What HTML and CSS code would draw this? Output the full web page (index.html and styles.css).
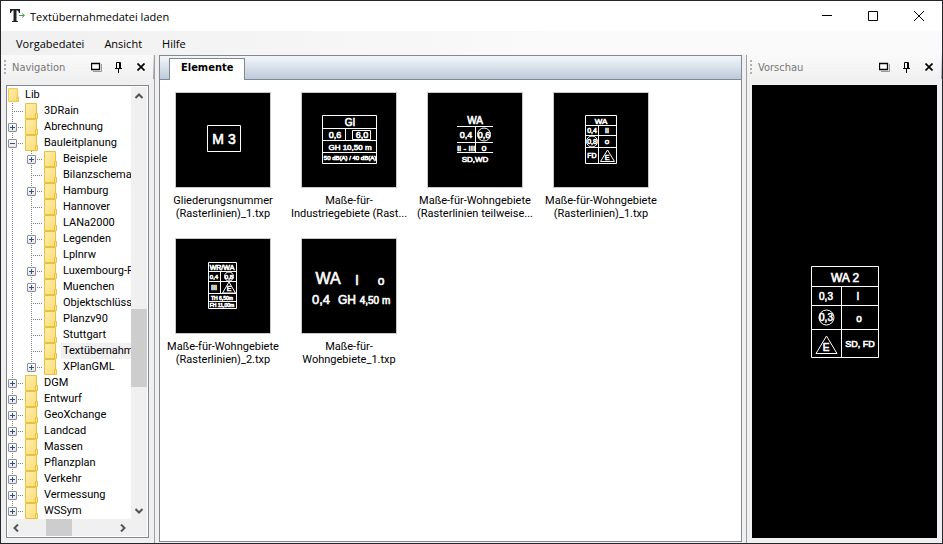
FILE: index.html
```html
<!DOCTYPE html>
<html lang="de">
<head>
<meta charset="utf-8">
<title>Textübernahmedatei laden</title>
<link rel="stylesheet" href="styles.css">
</head>
<body>
<svg class="defs" aria-hidden="true">
  <defs>
    <linearGradient id="paper" x1="0" y1="0" x2="1" y2="1"><stop offset="0" stop-color="#ffefae"/><stop offset="1" stop-color="#fbdc74"/></linearGradient>
    <symbol id="folder" viewBox="0 0 13 16">
      <path d="M0.5 0.5H11.5V15.5H0.5Z" fill="url(#paper)" stroke="#e9c13f"/>
      <path d="M10.5 10.5H12.5V15.5H10.5Z" fill="#fbe28a" stroke="#e9c13f"/>
    </symbol>
    <symbol id="float" viewBox="0 0 12 10">
      <path d="M2 9.500H10.500V2" fill="none" stroke="#999"/>
      <path d="M0.5 1.5H8.5V7.5H0.5Z" fill="#fff" stroke="#000" stroke-width="1.300"/>
    </symbol>
    <symbol id="pin" viewBox="0 0 8 11">
      <path d="M1.5 6V0.5H5.5V6M4.5 0V6M0 6.5H7M3.5 7V11" fill="none" stroke="#000"/>
    </symbol>
    <symbol id="cross" viewBox="0 0 8 8">
      <path d="M0.5 0.5L7.5 7.5M7.5 0.5L0.5 7.5" stroke="#000" stroke-width="1.7"/>
    </symbol>
    <symbol id="chevron" viewBox="0 0 8 6">
      <path d="M0.5 5L4 1.5L7.5 5" fill="none" stroke="#555" stroke-width="2"/>
    </symbol>
  </defs>
</svg>
<div class="window">
  <header class="titlebar">
    <svg class="app-icon" viewBox="0 0 16 16" aria-hidden="true">
      <path d="M0 1H10V5H9Q8.700 2.300 6.500 2.300V12.500Q6.500 13.300 8 13.300V14H2V13.300Q3.500 13.300 3.500 12.500V2.300Q1.300 2.300 1 5H0Z" fill="#222"/>
      <path d="M9 7.500H14M12 5.500L14.500 7.500L12 9.500" fill="none" stroke="#43a541"/>
    </svg>
    <h1>Textübernahmedatei laden</h1>
    <div class="window-buttons">
      <button aria-label="Minimieren"><svg viewBox="0 0 10 10"><path d="M0 4.500H10" stroke="#000"/></svg></button>
      <button aria-label="Maximieren"><svg viewBox="0 0 10 10"><path d="M0.500 0.500H9.500V9.500H0.500Z" fill="none" stroke="#000"/></svg></button>
      <button aria-label="Schließen"><svg viewBox="0 0 10 10"><path d="M0 0L10 10M10 0L0 10" stroke="#000"/></svg></button>
    </div>
  </header>
  <nav class="menubar">
    <button>Vorgabedatei</button><button>Ansicht</button><button>Hilfe</button>
  </nav>
  <main class="workspace">
    <aside class="dock dock-left">
      <div class="caption">
        <span class="grip"></span><h2>Navigation</h2>
        <button aria-label="Navigation lösen"><svg width="12" height="10"><use href="#float"/></svg></button>
        <button aria-label="Navigation anheften"><svg width="8" height="11"><use href="#pin"/></svg></button>
        <button aria-label="Navigation schließen"><svg width="8" height="8"><use href="#cross"/></svg></button>
      </div>
      <div class="tree-box">
        <div class="tree-view">
          <div class="node root"><svg class="folder"><use href="#folder"/></svg><span>Lib</span></div>
          <ul class="tree">
            <li><div class="node"><i></i><svg class="folder"><use href="#folder"/></svg><span>3DRain</span></div></li>
            <li><div class="node"><i><button aria-label="Abrechnung öffnen" class="plus"></button></i><svg class="folder"><use href="#folder"/></svg><span>Abrechnung</span></div></li>
            <li><div class="node"><i><button aria-label="Bauleitplanung schließen"></button></i><svg class="folder"><use href="#folder"/></svg><span>Bauleitplanung</span></div>
              <ul>
                <li><div class="node"><i><button aria-label="Beispiele öffnen" class="plus"></button></i><svg class="folder"><use href="#folder"/></svg><span>Beispiele</span></div></li>
                <li><div class="node"><i></i><svg class="folder"><use href="#folder"/></svg><span>Bilanzschemat</span></div></li>
                <li><div class="node"><i><button aria-label="Hamburg öffnen" class="plus"></button></i><svg class="folder"><use href="#folder"/></svg><span>Hamburg</span></div></li>
                <li><div class="node"><i></i><svg class="folder"><use href="#folder"/></svg><span>Hannover</span></div></li>
                <li><div class="node"><i></i><svg class="folder"><use href="#folder"/></svg><span>LANa2000</span></div></li>
                <li><div class="node"><i><button aria-label="Legenden öffnen" class="plus"></button></i><svg class="folder"><use href="#folder"/></svg><span>Legenden</span></div></li>
                <li><div class="node"><i></i><svg class="folder"><use href="#folder"/></svg><span>Lplnrw</span></div></li>
                <li><div class="node"><i><button aria-label="Luxembourg öffnen" class="plus"></button></i><svg class="folder"><use href="#folder"/></svg><span>Luxembourg-P</span></div></li>
                <li><div class="node"><i><button aria-label="Muenchen öffnen" class="plus"></button></i><svg class="folder"><use href="#folder"/></svg><span>Muenchen</span></div></li>
                <li><div class="node"><i></i><svg class="folder"><use href="#folder"/></svg><span>Objektschlüsse</span></div></li>
                <li><div class="node"><i></i><svg class="folder"><use href="#folder"/></svg><span>Planzv90</span></div></li>
                <li><div class="node"><i></i><svg class="folder"><use href="#folder"/></svg><span>Stuttgart</span></div></li>
                <li><div class="node"><i></i><svg class="folder"><use href="#folder"/></svg><span class="selected">Textübernahm</span></div></li>
                <li><div class="node"><i><button aria-label="XPlanGML öffnen" class="plus"></button></i><svg class="folder"><use href="#folder"/></svg><span>XPlanGML</span></div></li>
              </ul>
            </li>
            <li><div class="node"><i><button aria-label="DGM öffnen" class="plus"></button></i><svg class="folder"><use href="#folder"/></svg><span>DGM</span></div></li>
            <li><div class="node"><i><button aria-label="Entwurf öffnen" class="plus"></button></i><svg class="folder"><use href="#folder"/></svg><span>Entwurf</span></div></li>
            <li><div class="node"><i><button aria-label="GeoXchange öffnen" class="plus"></button></i><svg class="folder"><use href="#folder"/></svg><span>GeoXchange</span></div></li>
            <li><div class="node"><i><button aria-label="Landcad öffnen" class="plus"></button></i><svg class="folder"><use href="#folder"/></svg><span>Landcad</span></div></li>
            <li><div class="node"><i><button aria-label="Massen öffnen" class="plus"></button></i><svg class="folder"><use href="#folder"/></svg><span>Massen</span></div></li>
            <li><div class="node"><i><button aria-label="Pflanzplan öffnen" class="plus"></button></i><svg class="folder"><use href="#folder"/></svg><span>Pflanzplan</span></div></li>
            <li><div class="node"><i><button aria-label="Verkehr öffnen" class="plus"></button></i><svg class="folder"><use href="#folder"/></svg><span>Verkehr</span></div></li>
            <li><div class="node"><i><button aria-label="Vermessung öffnen" class="plus"></button></i><svg class="folder"><use href="#folder"/></svg><span>Vermessung</span></div></li>
            <li><div class="node"><i><button aria-label="WSSym öffnen" class="plus"></button></i><svg class="folder"><use href="#folder"/></svg><span>WSSym</span></div></li>
          </ul>
        </div>
        <div class="scroll vertical">
          <button aria-label="Nach oben"><svg width="8" height="6"><use href="#chevron"/></svg></button>
          <div class="track"><div class="thumb"></div></div>
          <button aria-label="Nach unten"><svg class="down" width="8" height="6"><use href="#chevron"/></svg></button>
        </div>
        <div class="scroll horizontal">
          <button aria-label="Nach links"><svg class="left" width="8" height="6"><use href="#chevron"/></svg></button>
          <div class="track"><div class="thumb"></div></div>
          <button aria-label="Nach rechts"><svg class="right" width="8" height="6"><use href="#chevron"/></svg></button>
        </div>
        <div class="corner"></div>
      </div>
    </aside>
    <section class="elements">
      <div class="tabs"><button>Elemente</button></div>
      <div class="gallery">
        <figure>
          <svg class="cad" viewBox="0 0 94 94">
            <path d="M31.500 32.500H64.500V58.500H31.500Z"/>
            <text x="48" y="51" class="t14">M 3</text>
          </svg>
          <figcaption>Gliederungsnummer<br>(Rasterlinien)_1.txp</figcaption>
        </figure>
        <figure>
          <svg class="cad" viewBox="0 0 94 94">
            <path d="M20.500 22.500H74.500V70.500H20.500ZM20 35.500H75M20 47.500H75M20 59.500H75M43.500 36V47M50.500 37.500H68.500V46.500H50.500Z"/>
            <text x="48" y="33" class="t10">GI</text><text x="33" y="45" class="t9">0,6</text><text x="60" y="45" class="t9">6,0</text>
            <text x="48" y="57" class="t8">GH 10,50 m</text><text x="48" y="67" class="t6">50 dB(A) / 40 dB(A)</text>
          </svg>
          <figcaption>Maße-für-<br>Industriegebiete (Rast...</figcaption>
        </figure>
        <figure>
          <svg class="cad" viewBox="0 0 94 94">
            <path d="M29 33.500H65M29 49.500H65M47.500 34V59M29 59.500H65"/><circle cx="56" cy="41.500" r="6.500"/>
            <text x="47" y="31" class="t10">WA</text><text x="38" y="45" class="t9">0,4</text><text x="56" y="45" class="t9">0,6</text>
            <text x="38" y="58" class="t8">II - III</text><text x="56" y="58" class="t9">o</text><text x="47" y="69" class="t8">SD,WD</text>
          </svg>
          <figcaption>Maße-für-Wohngebiete<br>(Rasterlinien teilweise...</figcaption>
        </figure>
        <figure>
          <svg class="cad" viewBox="0 0 94 94">
            <path d="M31.500 22.500H62.500V70.500H31.500ZM31 32.500H63M31 42.500H63M31 54.500H63M44.500 33V70M53.500 57L60.500 68.500H46.500Z"/><circle cx="38" cy="48.500" r="5.500"/>
            <text x="47" y="31" class="t8">WA</text><text x="38" y="40" class="t7">0,4</text><text x="53" y="40" class="t7">II</text>
            <text x="38" y="51" class="t7">0,8</text><text x="53" y="51" class="t8">o</text><text x="38" y="65" class="t7">FD</text><text x="53" y="67" class="t7">E</text>
          </svg>
          <figcaption>Maße-für-Wohngebiete<br>(Rasterlinien)_1.txp</figcaption>
        </figure>
        <figure>
          <svg class="cad" viewBox="0 0 94 94">
            <path d="M32.500 23.500H60.500V69.500H32.500ZM32 32.500H61M32 42.500H61M32 54.500H61M32 62.500H61M44.500 33V54M53 43L59.500 54H46.500Z"/><circle cx="53" cy="37.500" r="4.500"/>
            <text x="46" y="31" class="t7">WR/WA</text><text x="38" y="40" class="t6">0,4</text><text x="53" y="40" class="t6">0,8</text>
            <text x="38" y="51" class="t7">III</text><text x="53" y="52" class="t7">E</text><text x="46" y="61" class="t5">TH 6,50m</text><text x="46" y="68" class="t5">FH 11,00m</text>
          </svg>
          <figcaption>Maße-für-Wohngebiete<br>(Rasterlinien)_2.txp</figcaption>
        </figure>
        <figure>
          <svg class="cad" viewBox="0 0 94 94">
            <text x="26" y="45" class="t16">WA</text><text x="55" y="46" class="t14">I</text><text x="79" y="46" class="t12">o</text>
            <text x="19" y="65" class="t13">0,4</text><text x="45" y="65" class="t12">GH</text><text x="73" y="65" class="t10">4,50 m</text>
          </svg>
          <figcaption>Maße-für-<br>Wohngebiete_1.txp</figcaption>
        </figure>
      </div>
    </section>
    <aside class="dock dock-right">
      <div class="caption">
        <span class="grip"></span><h2>Vorschau</h2>
        <button aria-label="Vorschau lösen"><svg width="12" height="10"><use href="#float"/></svg></button>
        <button aria-label="Vorschau anheften"><svg width="8" height="11"><use href="#pin"/></svg></button>
        <button aria-label="Vorschau schließen"><svg width="8" height="8"><use href="#cross"/></svg></button>
      </div>
      <div class="preview">
        <svg class="cad-large" viewBox="0 0 68 92">
          <path d="M0.500 0.500H67.500V91.500H0.500ZM0 20.500H68M0 39.500H68M0 63.500H68M30.500 21V91M15.500 70L26 87.500H5Z"/><circle cx="15.500" cy="51.500" r="7.500"/>
          <text x="34" y="16" class="t12">WA 2</text><text x="15" y="34" class="t10">0,3</text><text x="47" y="34" class="t10">I</text>
          <text x="15" y="55" class="t10">0,3</text><text x="48" y="56" class="t10">o</text><text x="15" y="85" class="t10">E</text><text x="49" y="81" class="t9">SD, FD</text>
        </svg>
      </div>
    </aside>
  </main>
</div>
</body>
</html>
```
FILE: styles.css
```css
* { box-sizing: border-box; }
html, body { height: 100%; }
body { margin: 0; font-family: "Open Sans", "Noto Sans", sans-serif; font-size: 11px; color: #000; }
h1, h2, ul, figure { margin: 0; padding: 0; font-size: inherit; font-weight: 400; }
button { margin: 0; padding: 0; border: 0; background: none; font: inherit; color: inherit; }
svg { display: block; }
.defs { position: absolute; width: 0; height: 0; }

.window { display: flex; flex-direction: column; height: 100vh; border: 1px solid #24272b; background: #f0f0f0; }
.titlebar { display: flex; align-items: center; height: 30px; padding-left: 9px; background: #fff; }
.app-icon { width: 16px; height: 16px; margin-right: 4px; }
.titlebar h1 { flex: 1; }
.window-buttons { display: flex; height: 100%; }
.window-buttons button { display: grid; place-items: center; width: 46px; }
.window-buttons svg { width: 10px; height: 10px; }

.menubar { display: flex; gap: 20px; height: 24px; padding-left: 15px; background: linear-gradient(90deg, #f0f0f0, #fafafa 60%); }

.workspace { display: flex; flex: 1; min-height: 0; }
.dock { display: flex; flex-direction: column; flex: none; }
.dock-left { width: 154px; border-right: 1px solid #a0a0a0; }
.dock-right { width: 196px; margin-left: 4px; border-left: 1px solid #a0a0a0; }
.caption { display: flex; align-items: center; height: 24px; padding: 0 1px 0 3px; border-right: 1px solid; border-image: linear-gradient(#f0f0f0, #a0a0a0) 1; background: linear-gradient(#fafafa, #f0f0f0); color: #777; font-family: "DejaVu Sans Condensed", "DejaVu Sans", sans-serif; }
.caption h2 { flex: 1; }
.caption button { display: grid; place-items: center; width: 22px; height: 22px; }
.grip { width: 2px; height: 15px; margin-right: 6px; background: repeating-linear-gradient(#b0b0b0 0 2px, transparent 2px 4px); }

.tree-box { display: grid; grid-template: minmax(0, 1fr) 17px / minmax(0, 1fr) 17px; flex: 1; min-height: 0; margin: 6px 5px 5px; padding: 1px 0 1px 1px; border: 1px solid #828790; background: #fff; }
.tree-view { overflow: hidden; font: 11px/16px Roboto, "Liberation Sans", sans-serif; white-space: nowrap; }
.tree-view ul { list-style: none; }
.tree-view li { background: repeating-linear-gradient(#808080 0 1px, #fff 1px 2px) 4px 0 / 1px 100% no-repeat; }
.tree-view li:last-child { background-size: 1px 8px; }
.tree-view li > ul { padding-left: 19px; }
.node { display: flex; height: 16px; }
.node i { display: flex; align-items: center; flex: none; width: 17px; background: repeating-linear-gradient(90deg, #808080 0 1px, #fff 1px 2px) 4px 8px / 12px 1px no-repeat; }
.node span { padding-left: 2px; margin-left: 4px; }
.node .selected { flex: 1; background: #f0f0f0; }
.folder { flex: none; width: 13px; height: 16px; }
.root .folder { width: 11px; }
.node button { width: 9px; height: 9px; border: 1px solid #8e8f8f; border-radius: 1px; background: linear-gradient(#2b4f9b, #2b4f9b) 1px 3px / 5px 1px no-repeat, linear-gradient(#fff, #e4e4e4); }
.node .plus { background: linear-gradient(#2b4f9b, #2b4f9b) 1px 3px / 5px 1px no-repeat, linear-gradient(#2b4f9b, #2b4f9b) 3px 1px / 1px 5px no-repeat, linear-gradient(#fff, #e4e4e4); }

.scroll { display: flex; background: #f0f0f0; }
.scroll button { display: grid; place-items: center; flex: none; width: 16px; height: 17px; }
.scroll .track { display: flex; flex: 1; }
.vertical { margin-right: 1px; }
.vertical, .vertical .track { flex-direction: column; }
.thumb { background: #cdcdcd; }
.vertical .track::before { content: ""; flex: 205; }
.vertical .thumb { flex: 78; }
.vertical .track::after { content: ""; flex: 115; }
.horizontal .track::before { content: ""; flex: 22; }
.horizontal .thumb { flex: 25; }
.horizontal .track::after { content: ""; flex: 43; }
.corner { margin-right: 1px; background: #f0f0f0; }
.down { transform: rotate(180deg); }
.left { transform: rotate(-90deg); }
.right { transform: rotate(90deg); }

.elements { display: flex; flex-direction: column; flex: 1; min-width: 0; margin: 0 0 1px 4px; border: 1px solid #828790; background: #fff; }
.tabs { display: flex; height: 24px; padding: 2px 0 0 9px; border-bottom: 1px solid #828790; background: linear-gradient(#f4f7fa, #bccadb); }
.tabs button { height: 22px; padding: 0 11px 4px; border: 1px solid #828790; border-bottom: 0; background: #fff; font-family: "DejaVu Sans Condensed", "DejaVu Sans", sans-serif; font-weight: 700; }
.gallery { display: flex; flex-wrap: wrap; align-content: flex-start; row-gap: 18px; padding-top: 12px; }
.gallery figure { width: 126px; text-align: center; font: 11px/13px Roboto, "Liberation Sans", sans-serif; white-space: nowrap; }
.gallery figcaption { display: flow-root; margin-top: 6px; }
.cad { width: 96px; height: 96px; margin: 0 auto; border: 1px solid #c8c8c8; background: #000; }

.dock-right .preview { display: grid; place-items: center; flex: 1; margin: 6px 5px 5px; background: #000; }
.cad-large { width: 68px; height: 92px; }
.cad path, .cad circle, .cad-large path, .cad-large circle { fill: none; stroke: #fff; }
.cad text, .cad-large text { fill: #fff; stroke: #fff; stroke-width: 0.6px; text-anchor: middle; font-family: "Liberation Sans", sans-serif; }
.t5 { font-size: 5px; }
.t6 { font-size: 6px; }
.t7 { font-size: 7px; }
.t8 { font-size: 8px; }
.t9 { font-size: 9px; }
.t10 { font-size: 10px; }
.t12 { font-size: 12px; }
.t13 { font-size: 13px; }
.t14 { font-size: 14px; }
.t16 { font-size: 16px; }
```
